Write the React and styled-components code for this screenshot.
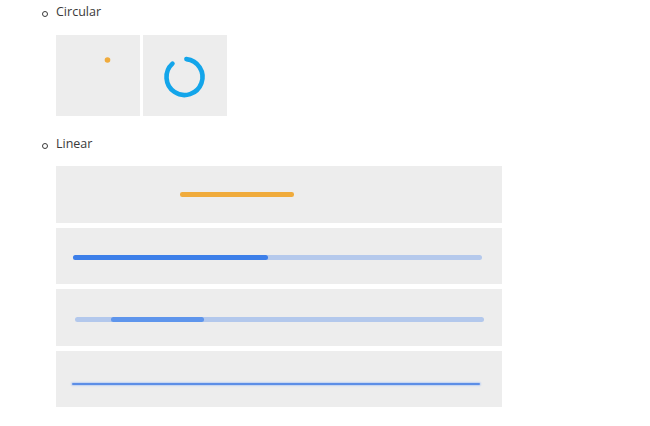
import React from 'react';
import styled, { createGlobalStyle } from 'styled-components';

const Global = createGlobalStyle`
  html, body { margin: 0; padding: 0; background: #fff; }
  body { font-family: 'Open Sans', 'Noto Sans', sans-serif; color: #3a3a3a; }
`;

const List = styled.ul`
  list-style: none;
  margin: 0;
  padding: 3px 0 0 56px;
`;

const Item = styled.li`
  margin-bottom: 19px;
`;

const Label = styled.div`
  position: relative;
  font-size: 12.5px;
  line-height: 18px;
  margin-bottom: ${p => p.$gap}px;
  &::before {
    content: '';
    position: absolute;
    left: -14px;
    top: 8px;
    width: 4px;
    height: 4px;
    border: 1px solid #3a3a3a;
    border-radius: 50%;
  }
`;

const SpinRow = styled.div`
  display: flex;
  gap: 3px;
`;

const SpinBox = styled.div`
  width: 84px;
  height: 81px;
  background: #ededed;
`;

const Stack = styled.div`
  display: flex;
  flex-direction: column;
  gap: 5px;
  width: 446px;
`;

const BarBox = styled.div`
  height: 56.5px;
  background: #ededed;
  box-sizing: border-box;
  padding: ${p => p.$top}px ${p => p.$right}px 0 ${p => p.$left}px;
`;

const Track = styled.div`
  position: relative;
  height: ${p => p.$h}px;
  border-radius: ${p => p.$h / 2}px;
  background: ${p => p.$bg};
  box-shadow: ${p => p.$glow ? '0 0 1.5px 1px rgba(160,190,245,0.6)' : 'none'};
`;

const Fill = styled.div`
  position: absolute;
  top: 0;
  bottom: 0;
  border-radius: inherit;
  background: ${p => p.$color};
`;

const Dot = () => (
  <svg width="84" height="81" style={{ display: 'block' }}>
    <circle cx="51.5" cy="25" r="2.8" fill="#f0ab3c" />
  </svg>
);

const Ring = () => {
  const cx = 41.5, cy = 42, r = 18;
  const a0 = (-84 * Math.PI) / 180;
  const a1 = (-132 * Math.PI) / 180 + 2 * Math.PI;
  const x0 = cx + r * Math.cos(a0), y0 = cy + r * Math.sin(a0);
  const x1 = cx + r * Math.cos(a1), y1 = cy + r * Math.sin(a1);
  return (
    <svg width="84" height="81" style={{ display: 'block' }}>
      <path
        d={`M ${x0} ${y0} A ${r} ${r} 0 1 1 ${x1} ${y1}`}
        fill="none"
        stroke="#13a5ea"
        strokeWidth="4.6"
        strokeLinecap="round"
      />
    </svg>
  );
};

export default function App() {
  return (
    <>
      <Global />
      <List>
        <Item>
          <Label $gap={14}>Circular</Label>
          <SpinRow>
            <SpinBox><Dot /></SpinBox>
            <SpinBox><Ring /></SpinBox>
          </SpinRow>
        </Item>
        <Item>
          <Label $gap={13}>Linear</Label>
          <Stack>
            <BarBox $top={26} $left={124} $right={208}>
              <Track $h={4.5} $bg="#f0ab3c" />
            </BarBox>
            <BarBox $top={27.5} $left={17} $right={20}>
              <Track $h={5} $bg="#b5c9ec">
                <Fill $color="#3d7fe9" style={{ left: 0, width: '47.6%' }} />
              </Track>
            </BarBox>
            <BarBox $top={28} $left={19} $right={18}>
              <Track $h={5} $bg="#b3c8ec">
                <Fill $color="#5e95ec" style={{ left: '8.8%', width: '22.7%' }} />
              </Track>
            </BarBox>
            <BarBox $top={32} $left={16} $right={22}>
              <Track $h={2} $bg="#5c8ee6" $glow />
            </BarBox>
          </Stack>
        </Item>
      </List>
    </>
  );
}
